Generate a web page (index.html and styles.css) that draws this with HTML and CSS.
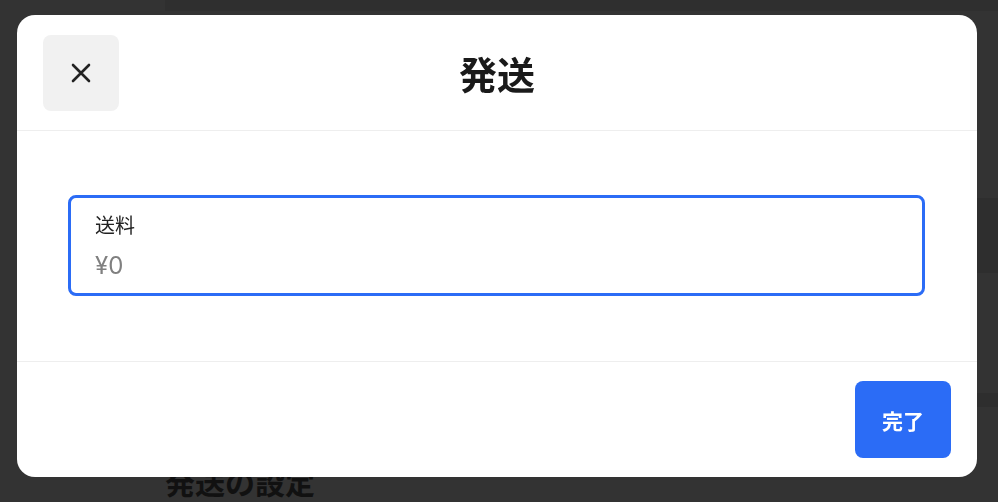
FILE: index.html
```html
<!DOCTYPE html>
<html lang="ja">
<head>
<meta charset="utf-8">
<title>発送</title>
<link rel="stylesheet" href="styles.css">
</head>
<body>
<div class="page">
  <div class="topbar"></div>
  <div class="card card-a"></div>
  <div class="card card-b"></div>
  <h2 class="page-title">発送の設定</h2>
</div>

<div class="modal" role="dialog" aria-labelledby="modal-title">
  <header class="modal-header">
    <button class="close-btn" aria-label="閉じる">
      <svg width="20" height="20" viewBox="0 0 20 20" aria-hidden="true">
        <path d="M2 2 L18 18 M18 2 L2 18" stroke="#222" stroke-width="2.6" stroke-linecap="round" fill="none"/>
      </svg>
    </button>
    <h1 id="modal-title" class="modal-title">発送</h1>
    <div class="spacer"></div>
  </header>
  <div class="modal-body">
    <label class="field">
      <span class="field-label">送料</span>
      <span class="field-value">¥0</span>
    </label>
  </div>
  <footer class="modal-footer">
    <button class="done-btn">完了</button>
  </footer>
</div>
</body>
</html>
```

FILE: styles.css
```css
* { box-sizing: border-box; }
html, body {
  margin: 0;
  padding: 0;
  height: 100%;
}
body {
  background: #333333;
  font-family: "Noto Sans CJK JP", "Noto Sans", sans-serif;
  overflow: hidden;
}
.page {
  padding-left: 165px;
  display: flex;
  flex-direction: column;
}
.topbar {
  height: 11px;
  background: #2f2f2f;
}
.card {
  background: #2e2e2e;
}
.card-a {
  margin-top: 187px;
  height: 75px;
}
.card-b {
  margin-top: 120px;
  height: 14px;
}
.page-title {
  margin: 54px 0 0;
  font-size: 30px;
  font-weight: 700;
  line-height: 40px;
  color: #111111;
}

.modal {
  position: fixed;
  left: 17px;
  top: 15px;
  width: 960px;
  height: 462px;
  background: #ffffff;
  border-radius: 18px;
  display: flex;
  flex-direction: column;
  overflow: hidden;
}
.modal-header {
  display: flex;
  align-items: center;
  padding: 19px 26px;
  border-bottom: 1px solid #eeeeee;
  height: 116px;
}
.close-btn {
  width: 76px;
  height: 76px;
  border: none;
  border-radius: 8px;
  background: #f1f1f1;
  display: flex;
  align-items: center;
  justify-content: center;
  padding: 0;
  cursor: pointer;
  flex: none;
}
.modal-title {
  flex: 1;
  margin: 0;
  text-align: center;
  font-size: 38px;
  font-weight: 700;
  color: #1a1a1a;
  line-height: 1.2;
}
.spacer {
  width: 76px;
  flex: none;
}
.modal-body {
  padding: 64px 52px 64px 51px;
  border-bottom: 1px solid #eeeeee;
  height: 231px;
}
.field {
  display: flex;
  flex-direction: column;
  height: 101px;
  border: 3px solid #2b6cf6;
  border-radius: 8px;
  padding: 12px 24px 0;
}
.field-label {
  font-size: 20px;
  line-height: 30px;
  color: #222222;
}
.field-value {
  margin-top: 11px;
  font-family: "Inter", "Noto Sans", sans-serif;
  font-size: 24px;
  line-height: 30px;
  color: #808080;
}
.modal-footer {
  flex: 1;
  display: flex;
  justify-content: flex-end;
  align-items: flex-start;
  padding: 19px 26px;
}
.done-btn {
  width: 96px;
  height: 77px;
  border: none;
  border-radius: 8px;
  background: #2b6cf6;
  color: #ffffff;
  font-family: "Noto Sans CJK JP", sans-serif;
  font-size: 21px;
  font-weight: 700;
  padding: 0;
  cursor: pointer;
}
```
